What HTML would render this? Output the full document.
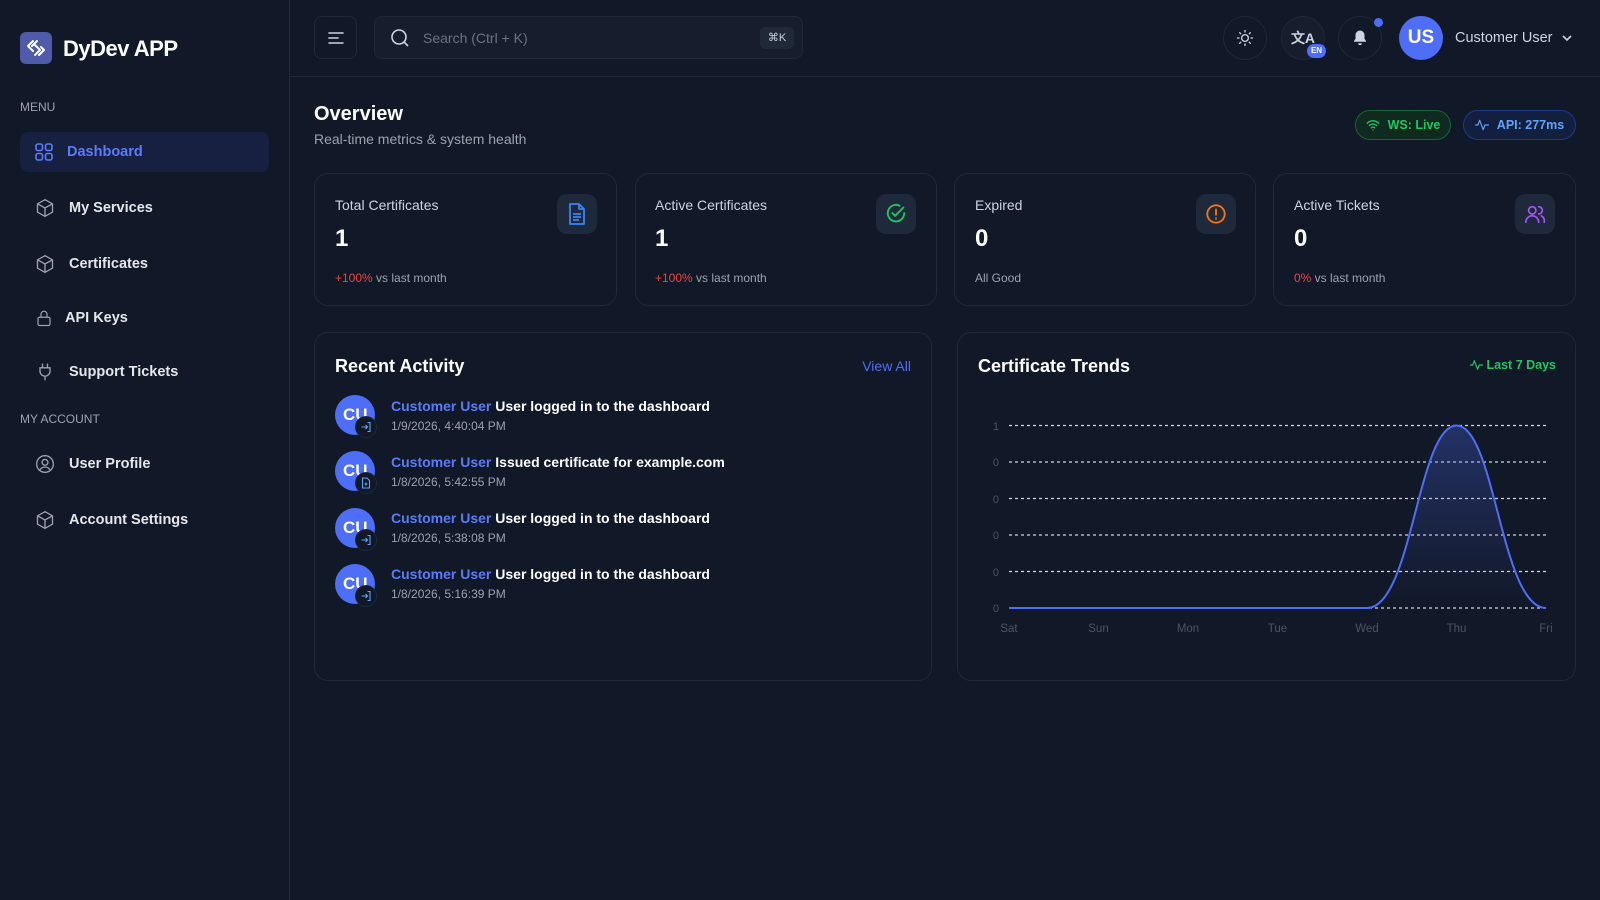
<!DOCTYPE html>
<html><head><meta charset="utf-8"><style>
*{box-sizing:border-box;margin:0;padding:0}
body{width:1600px;height:900px;background:#111827;font-family:"Liberation Sans",sans-serif;color:#e5e7eb;position:relative;overflow:hidden}
.a{position:absolute}
.side{left:0;top:0;width:290px;height:900px;border-right:1px solid #1f2937;background:#111827}
.nav{left:20px;width:249px;height:40px;display:flex;align-items:center;font-size:14.5px;font-weight:bold;color:#e5e7eb;border-radius:8px}
.nav svg{margin:0 14px 0 15px}
.sec{left:20px;font-size:12px;color:#9ca3af}
.card{border:1px solid #1f2937;border-radius:14px;background:#111827}
.lbl{font-size:14px;color:#cbd5e1}
.num{font-size:24px;font-weight:bold;color:#fff}
.ft{font-size:12px;color:#9ca3af}
.ib{width:40px;height:40px;border-radius:10px;background:#1e293b;display:flex;align-items:center;justify-content:center}
.circ{width:44px;height:44px;border-radius:50%;border:1px solid #1f2937;display:flex;align-items:center;justify-content:center}
.av{width:40px;height:40px;border-radius:50%;background:#4f6ef7;color:#fff;font-weight:bold;font-size:17px;line-height:40px;padding-left:8px}
.sub{width:22px;height:22px;border-radius:50%;background:#111827;border:1px solid #1f2937;display:flex;align-items:center;justify-content:center}
.l1{font-size:14px;font-weight:bold;color:#fff}
.l1 b{color:#5b7cfa}
.l2{font-size:12px;color:#9ca3af}
</style></head><body>
<div class="a side"></div>
<div class="a" style="left:20px;top:32px;width:32px;height:32px;border-radius:6px;background:#4f5aa8;display:flex;align-items:center;justify-content:center">
<svg width="22" height="18" viewBox="0 0 22 18" fill="none" stroke="#fff" stroke-width="2" stroke-linecap="round" stroke-linejoin="round"><path d="M8 2 3 7l5 5M12 2 7 7M10 16l5-5-5-5M14 16l5-5-3-3"/></svg></div>
<div class="a" style="left:63px;top:36px;font-size:22px;font-weight:bold;color:#fff;letter-spacing:-0.5px">DyDev APP</div>
<div class="a sec" style="top:100px">MENU</div>
<div class="a nav" style="top:132px;background:#172040;color:#5b7cfa"><svg width="18" height="18" viewBox="0 0 18 18" fill="none" stroke="#5b7cfa" stroke-width="1.6"><rect x="1" y="1" width="6.5" height="6.5" rx="2"/><rect x="10.5" y="1" width="6.5" height="6.5" rx="2"/><rect x="1" y="10.5" width="6.5" height="6.5" rx="2"/><rect x="10.5" y="10.5" width="6.5" height="6.5" rx="2"/></svg>Dashboard</div>
<div class="a nav" style="top:188px"><svg width="20" height="20" viewBox="0 0 24 24" fill="none" stroke="#9ca3af" stroke-width="1.6"><path d="M12 2 3 7v10l9 5 9-5V7z M3 7l9 5 9-5M12 12v10"/></svg>My Services</div>
<div class="a nav" style="top:244px"><svg width="20" height="20" viewBox="0 0 24 24" fill="none" stroke="#9ca3af" stroke-width="1.6"><path d="M12 2 3 7v10l9 5 9-5V7z M3 7l9 5 9-5M12 12v10"/></svg>Certificates</div>
<div class="a nav" style="top:298px"><svg width="18" height="20" viewBox="0 0 24 24" fill="none" stroke="#9ca3af" stroke-width="1.6" style="margin-right:12px"><rect x="4" y="11" width="16" height="11" rx="2"/><path d="M8 11V7a4 4 0 0 1 8 0v4"/></svg>API Keys</div>
<div class="a nav" style="top:352px"><svg width="20" height="20" viewBox="0 0 24 24" fill="none" stroke="#9ca3af" stroke-width="1.6"><path d="M9 2v5M15 2v5M6 7h12v4a6 6 0 0 1-12 0zM12 17v5"/></svg>Support Tickets</div>
<div class="a sec" style="top:412px">MY ACCOUNT</div>
<div class="a nav" style="top:444px"><svg width="20" height="20" viewBox="0 0 24 24" fill="none" stroke="#9ca3af" stroke-width="1.6"><circle cx="12" cy="12" r="10"/><circle cx="12" cy="10" r="3.5"/><path d="M6 19a7 7 0 0 1 12 0"/></svg>User Profile</div>
<div class="a nav" style="top:500px"><svg width="20" height="20" viewBox="0 0 24 24" fill="none" stroke="#9ca3af" stroke-width="1.6"><path d="M12 2 3 7v10l9 5 9-5V7z M3 7l9 5 9-5M12 12v10"/></svg>Account Settings</div>

<!-- header -->
<div class="a" style="left:290px;top:76px;width:1310px;height:1px;background:#1f2937"></div>
<div class="a" style="left:314px;top:16px;width:43px;height:43px;border:1px solid #1f2937;border-radius:8px;display:flex;align-items:center;justify-content:center"><svg width="18" height="14" viewBox="0 0 18 14" stroke="#cbd5e1" stroke-width="1.6" stroke-linecap="round"><path d="M2 2h14M2 7h9M2 12h14"/></svg></div>
<div class="a" style="left:374px;top:16px;width:429px;height:43px;border:1px solid #1f2937;border-radius:8px;background:#161e2e"></div>
<svg class="a" style="left:390px;top:28px" width="20" height="20" viewBox="0 0 20 20" fill="none" stroke="#cbd5e1" stroke-width="1.6"><circle cx="9" cy="9" r="7"/><path d="m14 14 4 4"/></svg>
<div class="a" style="left:423px;top:30px;font-size:14px;color:#6b7280">Search (Ctrl + K)</div>
<div class="a" style="left:760px;top:27px;width:34px;height:22px;background:#1f2937;border-radius:5px;font-size:11px;color:#cbd5e1;text-align:center;line-height:22px">⌘K</div>
<div class="a circ" style="left:1223px;top:16px"><svg width="18" height="18" viewBox="0 0 24 24" fill="none" stroke="#cbd5e1" stroke-width="1.8" stroke-linecap="round"><circle cx="12" cy="12" r="4.5"/><path d="M12 2v2M12 20v2M2 12h2M20 12h2M4.9 4.9l1.4 1.4M17.7 17.7l1.4 1.4M4.9 19.1l1.4-1.4M17.7 6.3l1.4-1.4"/></svg></div>
<div class="a circ" style="left:1281px;top:16px;background:#161e2e"><span style="font-size:14px;color:#cbd5e1;font-weight:bold">文A</span></div>
<div class="a" style="left:1307px;top:44px;width:19px;height:14px;border-radius:7px;background:#4f6ef7;font-size:8px;font-weight:bold;color:#fff;text-align:center;line-height:14px">EN</div>
<div class="a circ" style="left:1338px;top:16px"><svg width="18" height="20" viewBox="0 0 24 24" fill="#cbd5e1"><path d="M12 2a6 6 0 0 0-6 6v5l-2 3v1h16v-1l-2-3V8a6 6 0 0 0-6-6zM9.5 19a2.5 2.5 0 0 0 5 0z"/></svg></div>
<div class="a" style="left:1374px;top:18px;width:9px;height:9px;border-radius:50%;background:#4f6ef7"></div>
<div class="a" style="left:1399px;top:16px;width:44px;height:44px;border-radius:50%;background:#4f6ef7;color:#fff;font-weight:bold;font-size:19px;text-align:center;line-height:44px">US</div>
<div class="a" style="left:1455px;top:30px;font-size:14.5px;color:#cbd5e1">Customer User</div>
<svg class="a" style="left:1561px;top:33px" width="12" height="10" viewBox="0 0 12 10" fill="none" stroke="#cbd5e1" stroke-width="1.6"><path d="m2 3 4 4 4-4"/></svg>

<!-- overview -->
<div class="a" style="left:314px;top:103px;font-size:20px;font-weight:bold;color:#fff">Overview</div>
<div class="a" style="left:314px;top:131px;font-size:14px;color:#9ca3af">Real-time metrics &amp; system health</div>
<div class="a" style="left:1355px;top:110px;width:96px;height:30px;border:1px solid #166534;border-radius:15px;background:#0f2a1e;display:flex;align-items:center;justify-content:center;gap:8px;font-size:12.5px;font-weight:bold;color:#22c55e"><svg width="14" height="12" viewBox="0 0 24 20" fill="none" stroke="#22c55e" stroke-width="2.2" stroke-linecap="round"><path d="M2 7a14 14 0 0 1 20 0M5.5 11a9 9 0 0 1 13 0M9 15a4 4 0 0 1 6 0M12 18.5h0"/></svg>WS: Live</div>
<div class="a" style="left:1463px;top:110px;width:113px;height:30px;border:1px solid #1e3a8a;border-radius:15px;background:#131f3f;display:flex;align-items:center;justify-content:center;gap:8px;font-size:12.5px;font-weight:bold;color:#60a5fa"><svg width="14" height="12" viewBox="0 0 24 20" fill="none" stroke="#60a5fa" stroke-width="2" stroke-linecap="round" stroke-linejoin="round"><path d="M1 10h4l3-8 6 16 3-8h6"/></svg>API: 277ms</div>

<!-- stat cards -->
<div class="a card" style="left:314px;top:173px;width:303px;height:133px"></div>
<div class="a card" style="left:635px;top:173px;width:302px;height:133px"></div>
<div class="a card" style="left:954px;top:173px;width:302px;height:133px"></div>
<div class="a card" style="left:1273px;top:173px;width:303px;height:133px"></div>

<div class="a lbl" style="left:335px;top:197px">Total Certificates</div>
<div class="a num" style="left:335px;top:225px">1</div>
<div class="a ft" style="left:335px;top:271px"><span style="color:#ef4444">+100%</span> vs last month</div>
<div class="a ib" style="left:557px;top:194px"><svg width="18" height="22" viewBox="0 0 18 22" fill="none" stroke="#3b82f6" stroke-width="1.8" stroke-linejoin="round"><path d="M2 1h9l5 5v15H2zM11 1v5h5M5 11h8M5 14h8M5 17h6"/></svg></div>

<div class="a lbl" style="left:655px;top:197px">Active Certificates</div>
<div class="a num" style="left:655px;top:225px">1</div>
<div class="a ft" style="left:655px;top:271px"><span style="color:#ef4444">+100%</span> vs last month</div>
<div class="a ib" style="left:876px;top:194px"><svg width="22" height="22" viewBox="0 0 24 24" fill="none" stroke="#22c55e" stroke-width="2" stroke-linecap="round"><path d="M21 11a9 9 0 1 1-5-8M8 11l3 3 9-9"/></svg></div>

<div class="a lbl" style="left:975px;top:197px">Expired</div>
<div class="a num" style="left:975px;top:225px">0</div>
<div class="a ft" style="left:975px;top:271px">All Good</div>
<div class="a ib" style="left:1196px;top:194px"><svg width="22" height="22" viewBox="0 0 24 24" fill="none" stroke="#f97316" stroke-width="2" stroke-linecap="round"><circle cx="12" cy="12" r="9.5"/><path d="M12 7v6M12 16.5v.5"/></svg></div>

<div class="a lbl" style="left:1294px;top:197px">Active Tickets</div>
<div class="a num" style="left:1294px;top:225px">0</div>
<div class="a ft" style="left:1294px;top:271px"><span style="color:#ef4444">0%</span> vs last month</div>
<div class="a ib" style="left:1515px;top:194px"><svg width="22" height="22" viewBox="0 0 24 24" fill="none" stroke="#a855f7" stroke-width="1.8" stroke-linecap="round"><circle cx="9" cy="8" r="4"/><path d="M2 21a7 7 0 0 1 14 0M16 4a4 4 0 0 1 0 8M19 14a6 6 0 0 1 3 7"/></svg></div>

<!-- recent activity -->
<div class="a card" style="left:314px;top:332px;width:618px;height:349px"></div>
<div class="a" style="left:335px;top:356px;font-size:18px;font-weight:bold;color:#fff">Recent Activity</div>
<div class="a" style="left:860px;top:358px;font-size:14px;color:#4f6ef7;width:51px;text-align:right">View All</div>

<div class="a av" style="left:335px;top:395px">CU</div><div class="a sub" style="left:355px;top:416px"><svg width="12" height="12" viewBox="0 0 24 24" fill="none" stroke="#60a5fa" stroke-width="2.2"><path d="M15 3h5v18h-5M3 12h12M11 8l4 4-4 4"/></svg></div>
<div class="a l1" style="left:391px;top:398px"><b>Customer User</b> User logged in to the dashboard</div>
<div class="a l2" style="left:391px;top:419px">1/9/2026, 4:40:04 PM</div>

<div class="a av" style="left:335px;top:451px">CU</div><div class="a sub" style="left:355px;top:472px"><svg width="12" height="12" viewBox="0 0 24 24" fill="none" stroke="#60a5fa" stroke-width="2.2"><path d="M5 2h9l5 5v15H5zM12 11v6M9 14h6"/></svg></div>
<div class="a l1" style="left:391px;top:454px"><b>Customer User</b> Issued certificate for example.com</div>
<div class="a l2" style="left:391px;top:475px">1/8/2026, 5:42:55 PM</div>

<div class="a av" style="left:335px;top:508px">CU</div><div class="a sub" style="left:355px;top:529px"><svg width="12" height="12" viewBox="0 0 24 24" fill="none" stroke="#60a5fa" stroke-width="2.2"><path d="M15 3h5v18h-5M3 12h12M11 8l4 4-4 4"/></svg></div>
<div class="a l1" style="left:391px;top:510px"><b>Customer User</b> User logged in to the dashboard</div>
<div class="a l2" style="left:391px;top:531px">1/8/2026, 5:38:08 PM</div>

<div class="a av" style="left:335px;top:564px">CU</div><div class="a sub" style="left:355px;top:585px"><svg width="12" height="12" viewBox="0 0 24 24" fill="none" stroke="#60a5fa" stroke-width="2.2"><path d="M15 3h5v18h-5M3 12h12M11 8l4 4-4 4"/></svg></div>
<div class="a l1" style="left:391px;top:566px"><b>Customer User</b> User logged in to the dashboard</div>
<div class="a l2" style="left:391px;top:587px">1/8/2026, 5:16:39 PM</div>

<!-- chart -->
<div class="a card" style="left:957px;top:332px;width:619px;height:349px"></div>
<div class="a" style="left:978px;top:356px;font-size:18px;font-weight:bold;color:#fff">Certificate Trends</div>
<div class="a" style="left:1436px;top:358px;width:120px;white-space:nowrap;font-size:12.5px;font-weight:bold;color:#22c55e;display:flex;align-items:center;gap:4px;justify-content:flex-end"><svg width="13" height="12" viewBox="0 0 24 20" fill="none" stroke="#22c55e" stroke-width="2.2" stroke-linecap="round" stroke-linejoin="round"><path d="M1 10h4l3-8 6 16 3-8h6"/></svg>Last 7 Days</div>
<svg class="a" style="left:0;top:0" width="1600" height="900">
<defs><linearGradient id="g" x1="0" y1="0" x2="0" y2="1"><stop offset="0" stop-color="#4f6ef7" stop-opacity="0.3"/><stop offset="1" stop-color="#4f6ef7" stop-opacity="0"/></linearGradient></defs>
<g stroke="#d1d5db" stroke-width="1.2" stroke-dasharray="3 3">
<path d="M1009 425.5H1546M1009 462H1546M1009 498.5H1546M1009 535H1546M1009 571.5H1546M1009 608H1546"/></g>
<g font-family="Liberation Sans" font-size="11" fill="#4b5563" text-anchor="end">
<text x="999" y="430">1</text><text x="999" y="466">0</text><text x="999" y="503">0</text><text x="999" y="539">0</text><text x="999" y="576">0</text><text x="999" y="612">0</text></g>
<g font-family="Liberation Sans" font-size="11.5" fill="#4b5563" text-anchor="middle">
<text x="1009" y="632">Sat</text><text x="1098.5" y="632">Sun</text><text x="1188" y="632">Mon</text><text x="1277.5" y="632">Tue</text><text x="1367" y="632">Wed</text><text x="1456.5" y="632">Thu</text><text x="1546" y="632">Fri</text></g>
<path d="M1367 608C1412 608 1418 425.5 1456.5 425.5C1495 425.5 1501 608 1546 608Z" fill="url(#g)"/>
<path d="M1009 608H1367C1412 608 1418 425.5 1456.5 425.5C1495 425.5 1501 608 1546 608" fill="none" stroke="#4f6ef7" stroke-width="2"/>
</svg>
</body></html>
